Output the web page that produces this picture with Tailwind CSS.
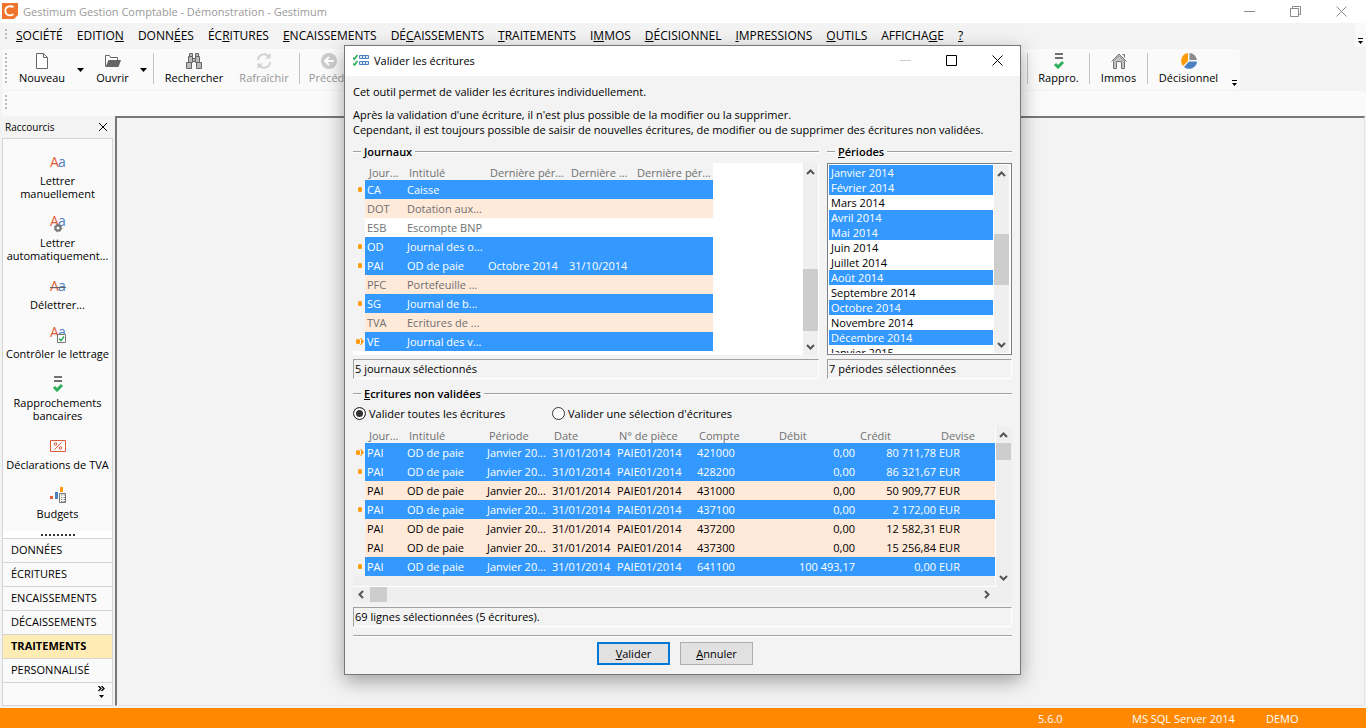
<!DOCTYPE html>
<html lang="fr">
<head>
    <meta charset="UTF-8">
    <meta name="viewport" content="width=device-width, initial-scale=1.0">
    <title>Gestimum Gestion Comptable - Démonstration - Gestimum</title>
    <script src="https://cdn.jsdelivr.net/npm/@tailwindcss/browser@4"></script>
</head>
<body class="relative h-screen flex flex-col overflow-hidden bg-[#f3f3f3] text-black text-[11px] leading-[15px] font-['Open_Sans','Noto_Sans',sans-serif]">

    <!-- title bar -->
    <header class="h-[23px] shrink-0 flex items-center bg-white text-[#9a9a9a]">
        <svg class="ml-0.5 mb-0.5 w-4 h-4" viewBox="0 0 16 16"><path d="M0 0h16v12l-4 4H0z" fill="#f0742c"/><path d="M11.500 4.300C10 3.200 8 3 6 3.600 2.700 4.800 2.500 9.500 5 11.600c2 1.200 4.500.9 6.500-.4" fill="none" stroke="#fff" stroke-width="1.800"/></svg>
        <span class="ml-[5px]">Gestimum Gestion Comptable - Démonstration - Gestimum</span>
        <div class="ml-auto mr-0.5 flex text-[#8a8a8a]">
            <button class="w-[46px] h-5 grid place-items-center" aria-label="Réduire"><svg class="w-[11px] h-[11px]" viewBox="0 0 11 11"><path d="M0 5.500h11" stroke="currentColor"/></svg></button>
            <button class="w-[46px] h-5 grid place-items-center" aria-label="Restaurer"><svg class="w-[11px] h-[11px]" viewBox="0 0 11 11" fill="none" stroke="currentColor"><path d="M.5 2.500h8v8h-8zM2.500 2.500v-2h8v8h-2"/></svg></button>
            <button class="w-[46px] h-5 grid place-items-center" aria-label="Fermer"><svg class="w-[11px] h-[11px]" viewBox="0 0 11 11"><path d="M.5.5l10 10M10.500.5l-10 10" stroke="currentColor"/></svg></button>
        </div>
    </header>

    <!-- menu bar -->
    <nav class="h-6 shrink-0 flex items-center text-[12px]">
        <span class="ml-[5px] mr-[9px] w-0.5 h-3 bg-[repeating-linear-gradient(#bbb_0_2px,transparent_2px_4px)]"></span>
        <div class="flex gap-[14px]">
            <a href="#"><u>S</u>OCIÉTÉ</a>
            <a href="#">EDITIO<u>N</u></a>
            <a href="#">DONN<u>É</u>ES</a>
            <a href="#">ÉC<u>R</u>ITURES</a>
            <a href="#"><u>E</u>NCAISSEMENTS</a>
            <a href="#">DÉ<u>C</u>AISSEMENTS</a>
            <a href="#"><u>T</u>RAITEMENTS</a>
            <a href="#">I<u>M</u>MOS</a>
            <a href="#"><u>D</u>ÉCISIONNEL</a>
            <a href="#"><u>I</u>MPRESSIONS</a>
            <a href="#"><u>O</u>UTILS</a>
            <a href="#">AFFICHA<u>G</u>E</a>
            <a href="#"><u>?</u></a>
        </div>
        <button class="ml-auto w-[11px] h-full bg-[#fafafa] flex items-end justify-center pb-[3px]" aria-label="Options"><svg class="w-[5px] h-[6px]" viewBox="0 0 5 6"><path d="M0 0h5v1H0zM0 3h5L2.500 6z"/></svg></button>
    </nav>

    <!-- toolbars -->
    <div class="h-[41px] shrink-0 mt-0.5 mr-[126px] ml-0.5 rounded flex bg-[#fafafa]">
        <span class="mt-1 ml-[3px] w-0.5 h-[30px] bg-[repeating-linear-gradient(#bbb_0_2px,transparent_2px_4px)]"></span>
        <button class="w-[70px] pt-1 flex flex-col items-center gap-px">
            <svg class="w-4 h-4" viewBox="0 0 16 16"><path d="M2.500.5h7l4 4v11h-11zM9.500.5v4h4" fill="#fff" stroke="#666"/></svg>
            Nouveau
        </button>
        <button class="w-2" aria-label="Liste Nouveau"><svg class="w-[7px] h-1" viewBox="0 0 7 4"><path d="M0 0h7L3.500 4z"/></svg></button>
        <button class="w-[55px] pt-1 flex flex-col items-center gap-px">
            <svg class="w-4 h-4" viewBox="0 0 16 16"><path d="M.5 13.500v-11h4l1 2h7v3" fill="#fff" stroke="#666"/><path d="M3.500 7H16l-2.500 7H.5z" fill="#666"/></svg>
            Ouvrir
        </button>
        <button class="w-2" aria-label="Liste Ouvrir"><svg class="w-[7px] h-1" viewBox="0 0 7 4"><path d="M0 0h7L3.500 4z"/></svg></button>
        <span class="mx-[5px] mt-1 w-px h-[31px] bg-[#c4c4c4]"></span>
        <button class="w-[70px] pt-1 flex flex-col items-center gap-px">
            <svg class="w-4 h-4" viewBox="0 0 16 16" fill="#bbb" stroke="#666"><path d="M3.500.5h3v3h-3zM9.500.5h3v3h-3zM2.500 3.500h4v6h-4zM9.500 3.500h4v6h-4zM.5 9.500h5v6h-5zM10.500 9.500h5v6h-5zM6.500 5.500h3v3h-3z"/></svg>
            Rechercher
        </button>
        <button class="w-[70px] pt-1 flex flex-col items-center gap-px text-[#969696]">
            <svg class="w-4 h-4" viewBox="0 0 16 16" fill="none" stroke="#d2d2d2" stroke-width="2"><path d="M2 7a6 6 0 0 1 11-3M14 9a6 6 0 0 1-11 3"/><path d="M14.500 0v5.500H9zM1.500 16v-5.500H7z" fill="#d2d2d2" stroke="none"/></svg>
            Rafraîchir
        </button>
        <span class="mr-[5px] mt-1 w-px h-[31px] bg-[#c4c4c4]"></span>
        <button class="w-[60px] pt-1 flex flex-col items-center gap-px text-[#969696]">
            <svg class="mr-3 w-4 h-4" viewBox="0 0 16 16"><circle cx="8" cy="8" r="8" fill="#ccc"/><path d="M13 8H4M8 4L4 8l4 4" fill="none" stroke="#fff" stroke-width="2"/></svg>
            Précédent
        </button>
        <div class="ml-auto flex">
            <span class="mt-1 w-px h-[31px] bg-[#c4c4c4]"></span>
            <button class="w-[61px] pt-1 flex flex-col items-center gap-px">
                <svg class="w-4 h-4" viewBox="0 0 16 16"><path d="M4 0h8v2H4zM4 4h8v2H4z" fill="#707070"/><path d="M4 11l3 3 5-5" fill="none" stroke="#2fae5b" stroke-width="3"/></svg>
                Rappro.
            </button>
            <span class="mt-1 w-px h-[31px] bg-[#c4c4c4]"></span>
            <button class="w-[57px] pt-1 flex flex-col items-center gap-px">
                <svg class="w-4 h-4" viewBox="0 0 16 16"><path d="M2.500 8v7.500h3v-7h5v7h3V8L8 2.500zM11.500 1.500h2v3" fill="#c4c4c4" stroke="#777"/><path d="M.5 8.500L8 1l7.500 7.500" fill="none" stroke="#777"/></svg>
                Immos
            </button>
            <span class="mt-1 w-px h-[31px] bg-[#c4c4c4]"></span>
            <button class="w-[81px] pt-1 flex flex-col items-center gap-px">
                <svg class="w-4 h-4" viewBox="0 0 16 16"><path d="M7 0v8l-5 5A8 8 0 0 1 7 0z" fill="#ff9b0b"/><path d="M8.500 0A8 8 0 0 1 16 7H8.500z" fill="#8b8b8b"/><path d="M8 8.500h8A8 8 0 0 1 3 14z" fill="#4d80c0"/></svg>
                Décisionnel
            </button>
            <button class="w-[11px] flex items-end justify-center pb-1" aria-label="Options"><svg class="w-[5px] h-[6px]" viewBox="0 0 5 6"><path d="M0 0h5v1H0zM0 3h5L2.500 6z"/></svg></button>
        </div>
    </div>
    <div class="h-[25px] shrink-0 mt-px ml-0.5 rounded bg-[#fafafa] pl-[3px] pt-1">
        <span class="block w-0.5 h-4 bg-[repeating-linear-gradient(#bbb_0_2px,transparent_2px_4px)]"></span>
    </div>

    <main class="flex-1 min-h-0 flex pb-0.5">
        <!-- shortcuts -->
        <aside class="w-[115px] flex flex-col">
            <div class="h-[22px] flex items-center justify-between pl-[5px] pr-2 text-[10px]">
                Raccourcis
                <button aria-label="Fermer le volet"><svg class="w-2 h-2" viewBox="0 0 8 8"><path d="M0 0l8 8M8 0L0 8" stroke="#000"/></svg></button>
            </div>
            <div class="flex-1 mx-0.5 border border-[#d5d5d5] bg-[#fafafa] flex flex-col">
                <div class="flex-1 pt-[15px] flex flex-col gap-4 leading-[13px] text-center whitespace-nowrap">
                    <a href="#" class="flex flex-col items-center gap-1">
                        <svg class="w-4 h-4 overflow-visible" viewBox="0 0 16 16" font-family="Open Sans" font-size="14"><text x="0" y="13" fill="#df5b38">A</text><text x="8" y="13" fill="#4d80c0">a</text></svg>
                        <span>Lettrer<br>manuellement</span>
                    </a>
                    <a href="#" class="flex flex-col items-center gap-1">
                        <svg class="w-4 h-4 overflow-visible" viewBox="0 0 16 16" font-family="Open Sans" font-size="14"><text x="0" y="10" fill="#df5b38">A</text><text x="8" y="10" fill="#4d80c0">a</text><circle cx="8" cy="12" r="2.500" fill="#fff" stroke="#777" stroke-width="2"/><circle cx="8" cy="12" r="3.800" fill="none" stroke="#777" stroke-dasharray="1.500 1.500"/></svg>
                        <span>Lettrer<br>automatiquement...</span>
                    </a>
                    <a href="#" class="flex flex-col items-center gap-1">
                        <svg class="w-4 h-4 overflow-visible" viewBox="0 0 16 16" font-family="Open Sans" font-size="14"><text x="0" y="13" fill="#df5b38">A</text><text x="8" y="13" fill="#4d80c0">a</text><path d="M0 9.500h16" stroke="#666"/></svg>
                        <span>Délettrer...</span>
                    </a>
                    <a href="#" class="flex flex-col items-center gap-1">
                        <svg class="w-4 h-4 overflow-visible" viewBox="0 0 16 16" font-family="Open Sans" font-size="14"><text x="0" y="10" fill="#df5b38">A</text><text x="8" y="10" fill="#4d80c0">a</text><path d="M7.500 7.500h8v8h-8z" fill="#fff" stroke="#777"/><path d="M9 11.500l2 2 3-4" fill="none" stroke="#2fae5b" stroke-width="1.500"/></svg>
                        <span>Contrôler le lettrage</span>
                    </a>
                    <a href="#" class="flex flex-col items-center gap-1">
                        <svg class="w-4 h-4" viewBox="0 0 16 16"><path d="M4 0h8v2H4zM4 4h8v2H4z" fill="#707070"/><path d="M4 11l3 3 5-5" fill="none" stroke="#2fae5b" stroke-width="3"/></svg>
                        <span>Rapprochements<br>bancaires</span>
                    </a>
                    <a href="#" class="flex flex-col items-center gap-1">
                        <svg class="w-4 h-4" viewBox="0 0 16 16" fill="none" stroke="#df5b38"><path d="M.5 2.500h15v11H.5zM4.500 11.500l7-7"/><circle cx="5.500" cy="6" r="1.300"/><circle cx="10.500" cy="10" r="1.300"/></svg>
                        <span>Déclarations de TVA</span>
                    </a>
                    <a href="#" class="flex flex-col items-center gap-1">
                        <svg class="w-4 h-4" viewBox="0 0 16 16"><path d="M0 9h3v3H0z" fill="#df5b38"/><path d="M5 5h3v7H5z" fill="#4d80c0"/><path d="M10 0h3v5h-3z" fill="#ff9b0b"/><path d="M9.500 6.500h6v9h-6z" fill="#fff" stroke="#777"/><path d="M11 8h4M11 10.500h4M11 12.500h4M11 14.500h4" stroke="#888" stroke-dasharray="1 .5"/></svg>
                        <span>Budgets</span>
                    </a>
                </div>
                <div class="h-[7px] bg-white grid place-items-center"><span class="w-[34px] h-0.5 bg-[repeating-linear-gradient(90deg,#333_0_2px,transparent_2px_4px)]"></span></div>
                <a href="#" class="h-6 shrink-0 border-t border-[#d5d5d5] pl-2 leading-[22px]">DONNÉES</a>
                <a href="#" class="h-6 shrink-0 border-t border-[#d5d5d5] pl-2 leading-[22px]">ÉCRITURES</a>
                <a href="#" class="h-6 shrink-0 border-t border-[#d5d5d5] pl-2 leading-[22px]">ENCAISSEMENTS</a>
                <a href="#" class="h-6 shrink-0 border-t border-[#d5d5d5] pl-2 leading-[22px]">DÉCAISSEMENTS</a>
                <a href="#" class="h-6 shrink-0 border-t border-[#d5d5d5] pl-2 leading-[22px] bg-[#ffecb4] font-bold">TRAITEMENTS</a>
                <a href="#" class="h-6 shrink-0 border-t border-[#d5d5d5] pl-2 leading-[22px]">PERSONNALISÉ</a>
                <div class="h-[23px] shrink-0 border-t border-[#d5d5d5] flex justify-end pr-[7px] pt-[3px]">
                    <button class="h-3" aria-label="Configurer"><svg class="w-[7px] h-[12px]" viewBox="0 0 7 12"><path d="M.5 0l2.500 2.500L.5 5M3.500 0L6 2.500 3.500 5" fill="none" stroke="#000" stroke-width="1.300"/><path d="M1 9h5L3.500 12z"/></svg></button>
                </div>
            </div>
        </aside>
        <section class="flex-1 mr-px border-t-2 border-l-2 border-t-[#777] border-l-[#777] border-r border-b border-r-[#e3e3e3] border-b-[#e3e3e3]"></section>
    </main>

    <footer class="h-5 shrink-0 flex items-center justify-end bg-[#ff8800] pt-px text-white">
        <span class="w-[94px]">5.6.0</span>
        <span class="w-[134px]">MS SQL Server 2014</span>
        <span class="w-[100px]">DEMO</span>
    </footer>

    <!-- dialog -->
    <div role="dialog" aria-labelledby="dlg-title" class="absolute left-0 right-px top-[45px] mx-auto w-[677px] border border-[#777] bg-[#f3f3f3] shadow-[0_6px_18px_rgba(0,0,0,0.35)]">
        <div class="h-[30px] flex items-center bg-white pl-2">
            <svg class="w-4 h-4" viewBox="0 0 16 16" fill="none"><path d="M0 4.500l1.500 1.500L4.500 2M0 10.500L1.500 12l3-4" stroke="#2fae5b" stroke-width="1.700"/><path d="M6.500 2.500h9v3h-9zM6.500 8.500h9v3h-9zM9.500 2.500v3M12.500 2.500v3M9.500 8.500v3M12.500 8.500v3" stroke="#4d80c0" fill="#dfe9f5"/></svg>
            <h1 id="dlg-title" class="ml-[5px] pb-px">Valider les écritures</h1>
            <div class="ml-auto flex pb-0.5">
                <button class="w-[46px] h-7 grid place-items-center text-[#ccc]" aria-label="Réduire"><svg class="w-[11px] h-[11px]" viewBox="0 0 11 11"><path d="M0 5.500h11" stroke="currentColor"/></svg></button>
                <button class="w-[46px] h-7 grid place-items-center" aria-label="Agrandir"><svg class="w-[11px] h-[11px]" viewBox="0 0 11 11"><path d="M.5.500h10v10H.5z" fill="none" stroke="currentColor"/></svg></button>
                <button class="w-[46px] h-7 grid place-items-center" aria-label="Fermer"><svg class="w-[11px] h-[11px]" viewBox="0 0 11 11"><path d="M.5.500l10 10M10.500.500l-10 10" stroke="currentColor"/></svg></button>
            </div>
        </div>

        <div class="px-2 pt-2 pb-[9px] whitespace-nowrap">
            <p>Cet outil permet de valider les écritures individuellement.</p>
            <p class="mt-2">Après la validation d'une écriture, il n'est plus possible de la modifier ou la supprimer.<br>Cependant, il est toujours possible de saisir de nouvelles écritures, de modifier ou de supprimer des écritures non validées.</p>

            <div class="mt-[7px] flex gap-2">
                <section class="flex-1">
                    <h2 class="flex items-center gap-[3px] font-semibold"><span class="w-2 h-0.5 border-t border-[#a0a0a0] bg-white"></span><span><u>J</u>ournaux</span><span class="flex-1 h-0.5 border-t border-[#a0a0a0] bg-white"></span></h2>
                    <div class="mt-1 h-[192px] flex bg-white">
                        <table class="table-fixed w-[360px] h-[188px] shrink-0 text-left">
                            <thead class="bg-[#f3f3f3] text-[#707070]">
                                <tr class="h-[17px]">
                                    <th class="w-3 p-0"></th>
                                    <th class="w-10 p-0 pt-0.5 pl-1 font-normal">Jour...</th>
                                    <th class="w-[81px] p-0 pt-0.5 pl-1 font-normal">Intitulé</th>
                                    <th class="w-[81px] p-0 pt-0.5 pl-1 font-normal">Dernière pér...</th>
                                    <th class="w-[66px] p-0 pt-0.5 pl-1 font-normal">Dernière ...</th>
                                    <th class="w-20 p-0 pt-0.5 pl-1 font-normal">Dernière pér...</th>
                                </tr>
                            </thead>
                            <tbody id="journaux"></tbody>
                        </table>
                        <div class="ml-auto mr-px w-[15px] flex flex-col items-center bg-[#efefef] text-[#555]">
                            <svg class="mt-[6px] w-[9px] h-[6px]" viewBox="0 0 9 6"><path d="M1 5l3.500-3.500L8 5" fill="none" stroke="currentColor" stroke-width="2"/></svg>
                            <span class="mt-[94px] w-full h-[62px] bg-[#cdcdcd]"></span>
                            <svg class="mt-auto mb-[5px] w-[9px] h-[6px]" viewBox="0 0 9 6"><path d="M1 1l3.500 3.500L8 1" fill="none" stroke="currentColor" stroke-width="2"/></svg>
                        </div>
                    </div>
                    <p class="mt-1 h-5 pl-px pt-px border border-t-[#a0a0a0] border-l-[#a0a0a0] border-r-white border-b-white">5 journaux sélectionnés</p>
                </section>

                <section class="w-[185px]">
                    <h2 class="flex items-center gap-[3px] font-semibold"><span class="w-2 h-0.5 border-t border-[#a0a0a0] bg-white"></span><label for="periodes"><u>P</u>ériodes</label><span class="flex-1 h-0.5 border-t border-[#a0a0a0] bg-white"></span></h2>
                    <div class="mt-1 h-[192px] flex border border-[#7a7f87] bg-white p-px">
                        <select id="periodes" multiple class="flex-1 h-[188px] p-0 border-0 rounded-none bg-white text-black overflow-hidden [scrollbar-width:none] outline-none *:h-[15px] *:min-h-0 *:p-0 *:pl-0.5 *:leading-[15px] *:rounded-none *:checked:bg-[linear-gradient(#3399ff,#3399ff)] *:checked:[-webkit-text-fill-color:white]">
                            <option selected>Janvier 2014</option>
                            <option selected>Février 2014</option>
                            <option>Mars 2014</option>
                            <option selected>Avril 2014</option>
                            <option selected>Mai 2014</option>
                            <option>Juin 2014</option>
                            <option>Juillet 2014</option>
                            <option selected>Août 2014</option>
                            <option>Septembre 2014</option>
                            <option selected>Octobre 2014</option>
                            <option>Novembre 2014</option>
                            <option selected>Décembre 2014</option>
                            <option>Janvier 2015</option>
                        </select>
                        <div class="mx-px w-[15px] flex flex-col items-center bg-[#efefef] text-[#555]">
                            <svg class="mt-[6px] w-[9px] h-[6px]" viewBox="0 0 9 6"><path d="M1 5l3.500-3.500L8 5" fill="none" stroke="currentColor" stroke-width="2"/></svg>
                            <span class="mt-[57px] w-full h-[51px] bg-[#cdcdcd]"></span>
                            <svg class="mt-auto mb-[5px] w-[9px] h-[6px]" viewBox="0 0 9 6"><path d="M1 1l3.500 3.500L8 1" fill="none" stroke="currentColor" stroke-width="2"/></svg>
                        </div>
                    </div>
                    <p class="mt-1 h-5 pl-px pt-px border border-t-[#a0a0a0] border-l-[#a0a0a0] border-r-white border-b-white">7 périodes sélectionnées</p>
                </section>
            </div>

            <section class="mt-[7px]">
                <h2 class="flex items-center gap-[3px] font-semibold"><span class="w-2 h-0.5 border-t border-[#a0a0a0] bg-white"></span><span><u>E</u>critures non validées</span><span class="flex-1 h-0.5 border-t border-[#a0a0a0] bg-white"></span></h2>
                <div class="mt-[5px] flex">
                    <label class="w-[199px] flex items-center gap-[3px]"><input type="radio" name="mode" checked class="appearance-none w-[13px] h-[13px] rounded-full border border-[#333] bg-white checked:bg-[#333] checked:shadow-[inset_0_0_0_2px_white]">Valider toutes les écritures</label>
                    <label class="flex items-center gap-[3px]"><input type="radio" name="mode" class="appearance-none w-[13px] h-[13px] rounded-full border border-[#333] bg-white checked:bg-[#333] checked:shadow-[inset_0_0_0_2px_white]">Valider une sélection d'écritures</label>
                </div>
                <div class="mt-[5px] flex bg-[#efefef]">
                    <div class="flex-1 pb-[10px] border-r border-b border-white">
                        <table class="table-fixed w-full text-left">
                            <thead class="bg-[#f3f3f3] text-[#707070]">
                                <tr class="h-[17px]">
                                    <th class="w-3 p-0"></th>
                                    <th class="w-10 p-0 pt-0.5 pl-1 font-normal">Jour...</th>
                                    <th class="w-20 p-0 pt-0.5 pl-1 font-normal">Intitulé</th>
                                    <th class="w-[65px] p-0 pt-0.5 pl-1 font-normal">Période</th>
                                    <th class="w-[65px] p-0 pt-0.5 pl-1 font-normal">Date</th>
                                    <th class="w-20 p-0 pt-0.5 pl-1 font-normal">N° de pièce</th>
                                    <th class="w-20 p-0 pt-0.5 pl-1 font-normal">Compte</th>
                                    <th class="w-[81px] p-0 pt-0.5 pl-1 font-normal">Débit</th>
                                    <th class="w-[81px] p-0 pt-0.5 pl-1 font-normal">Crédit</th>
                                    <th class="p-0 pt-0.5 pl-1 font-normal">Devise</th>
                                </tr>
                            </thead>
                            <tbody id="ecritures"></tbody>
                        </table>
                    </div>
                    <div class="w-4 pr-px flex flex-col items-center text-[#555]">
                        <svg class="mt-[6px] w-[9px] h-[6px]" viewBox="0 0 9 6"><path d="M1 5l3.500-3.500L8 5" fill="none" stroke="currentColor" stroke-width="2"/></svg>
                        <span class="mt-[5px] w-full h-[17px] bg-[#cdcdcd]"></span>
                        <svg class="mt-auto mb-[6px] w-[9px] h-[6px]" viewBox="0 0 9 6"><path d="M1 1l3.500 3.500L8 1" fill="none" stroke="currentColor" stroke-width="2"/></svg>
                    </div>
                </div>
                <div class="h-4 flex items-center bg-[#efefef] pl-[5px] pr-[22px] pb-px text-[#555]">
                    <svg class="w-[6px] h-[9px]" viewBox="0 0 6 9"><path d="M5 1L1.500 4.500 5 8" fill="none" stroke="currentColor" stroke-width="2"/></svg>
                    <span class="ml-[6px] w-[17px] h-[15px] bg-[#cdcdcd]"></span>
                    <svg class="ml-auto w-[6px] h-[9px]" viewBox="0 0 6 9"><path d="M1 1l3.500 3.500L1 8" fill="none" stroke="currentColor" stroke-width="2"/></svg>
                </div>
                <p class="mt-1 h-5 pl-px pt-px border border-t-[#a0a0a0] border-l-[#a0a0a0] border-r-white border-b-white">69 lignes sélectionnées (5 écritures).</p>
            </section>

            <div class="mt-2 pt-[6px] pr-[15px] flex justify-center gap-[10px] border-t border-[#a0a0a0] shadow-[inset_0_1px_0_white]">
                <button class="w-[73px] h-[23px] border-2 border-[#0078d7] bg-[#e1e1e1] leading-[19px]"><u>V</u>alider</button>
                <button class="w-[73px] h-[23px] border border-[#adadad] bg-[#e1e1e1] leading-[21px]"><u>A</u>nnuler</button>
            </div>
        </div>
    </div>

    <script>
        // mark: 0 = none, 1 = selected, 2 = selected + current line
        const journaux = [
            { mark: 1, cells: ["CA", "Caisse", "", "", ""] },
            { mark: 0, cells: ["DOT", "Dotation aux...", "", "", ""] },
            { mark: 0, plain: true, cells: ["ESB", "Escompte BNP", "", "", ""] },
            { mark: 1, cells: ["OD", "Journal des o...", "", "", ""] },
            { mark: 1, cells: ["PAI", "OD de paie", "Octobre 2014", "31/10/2014", ""] },
            { mark: 0, cells: ["PFC", "Portefeuille ...", "", "", ""] },
            { mark: 1, cells: ["SG", "Journal de b...", "", "", ""] },
            { mark: 0, cells: ["TVA", "Ecritures de ...", "", "", ""] },
            { mark: 2, cells: ["VE", "Journal des v...", "", "", ""] },
        ];

        const ecritures = [
            { mark: 2, compte: "421000", debit: "0,00", credit: "80 711,78" },
            { mark: 1, compte: "428200", debit: "0,00", credit: "86 321,67" },
            { mark: 0, compte: "431000", debit: "0,00", credit: "50 909,77" },
            { mark: 1, compte: "437100", debit: "0,00", credit: "2 172,00" },
            { mark: 0, compte: "437200", debit: "0,00", credit: "12 582,31" },
            { mark: 0, compte: "437300", debit: "0,00", credit: "15 256,84" },
            { mark: 1, compte: "641100", debit: "100 493,17", credit: "0,00" },
        ];

        const dot = '<rect x="3" y="1" width="4" height="5" rx="1.500"/>';
        const dotArrow = '<rect x="1" y="1" width="4" height="5" rx="1.500"/><path d="M5 0h1l3 3.500L6 7H5l1-1.500v-4z"/>';

        function rowHtml(row, cells, textColor) {
            const bg = row.mark ? "bg-[#3399ff] text-white" : row.plain ? "bg-white " + textColor : "bg-[#ffe9d9] " + textColor;
            const icon = row.mark ? `<svg class="ml-0.5 w-[10px] h-[7px]" viewBox="0 0 10 7" fill="#ff9b0b">${row.mark === 2 ? dotArrow : dot}</svg>` : "";
            const tds = cells.map((c, i) => `<td class="p-0 ${i === 6 || i === 7 ? "pr-px text-right" : "pl-0.5"} ${bg}">${c}</td>`).join("");
            return `<tr class="h-[19px]"><td class="p-0 bg-[#f3f3f3]">${icon}</td>${tds}</tr>`;
        }

        document.getElementById("journaux").innerHTML =
            journaux.map(j => rowHtml(j, j.cells, "text-[#707070]")).join("");

        document.getElementById("ecritures").innerHTML =
            ecritures.map(e => rowHtml(e, ["PAI", "OD de paie", "Janvier 20...", "31/01/2014", "PAIE01/2014", e.compte, e.debit, e.credit, "EUR"], "text-black")).join("");
    </script>
</body>
</html>
